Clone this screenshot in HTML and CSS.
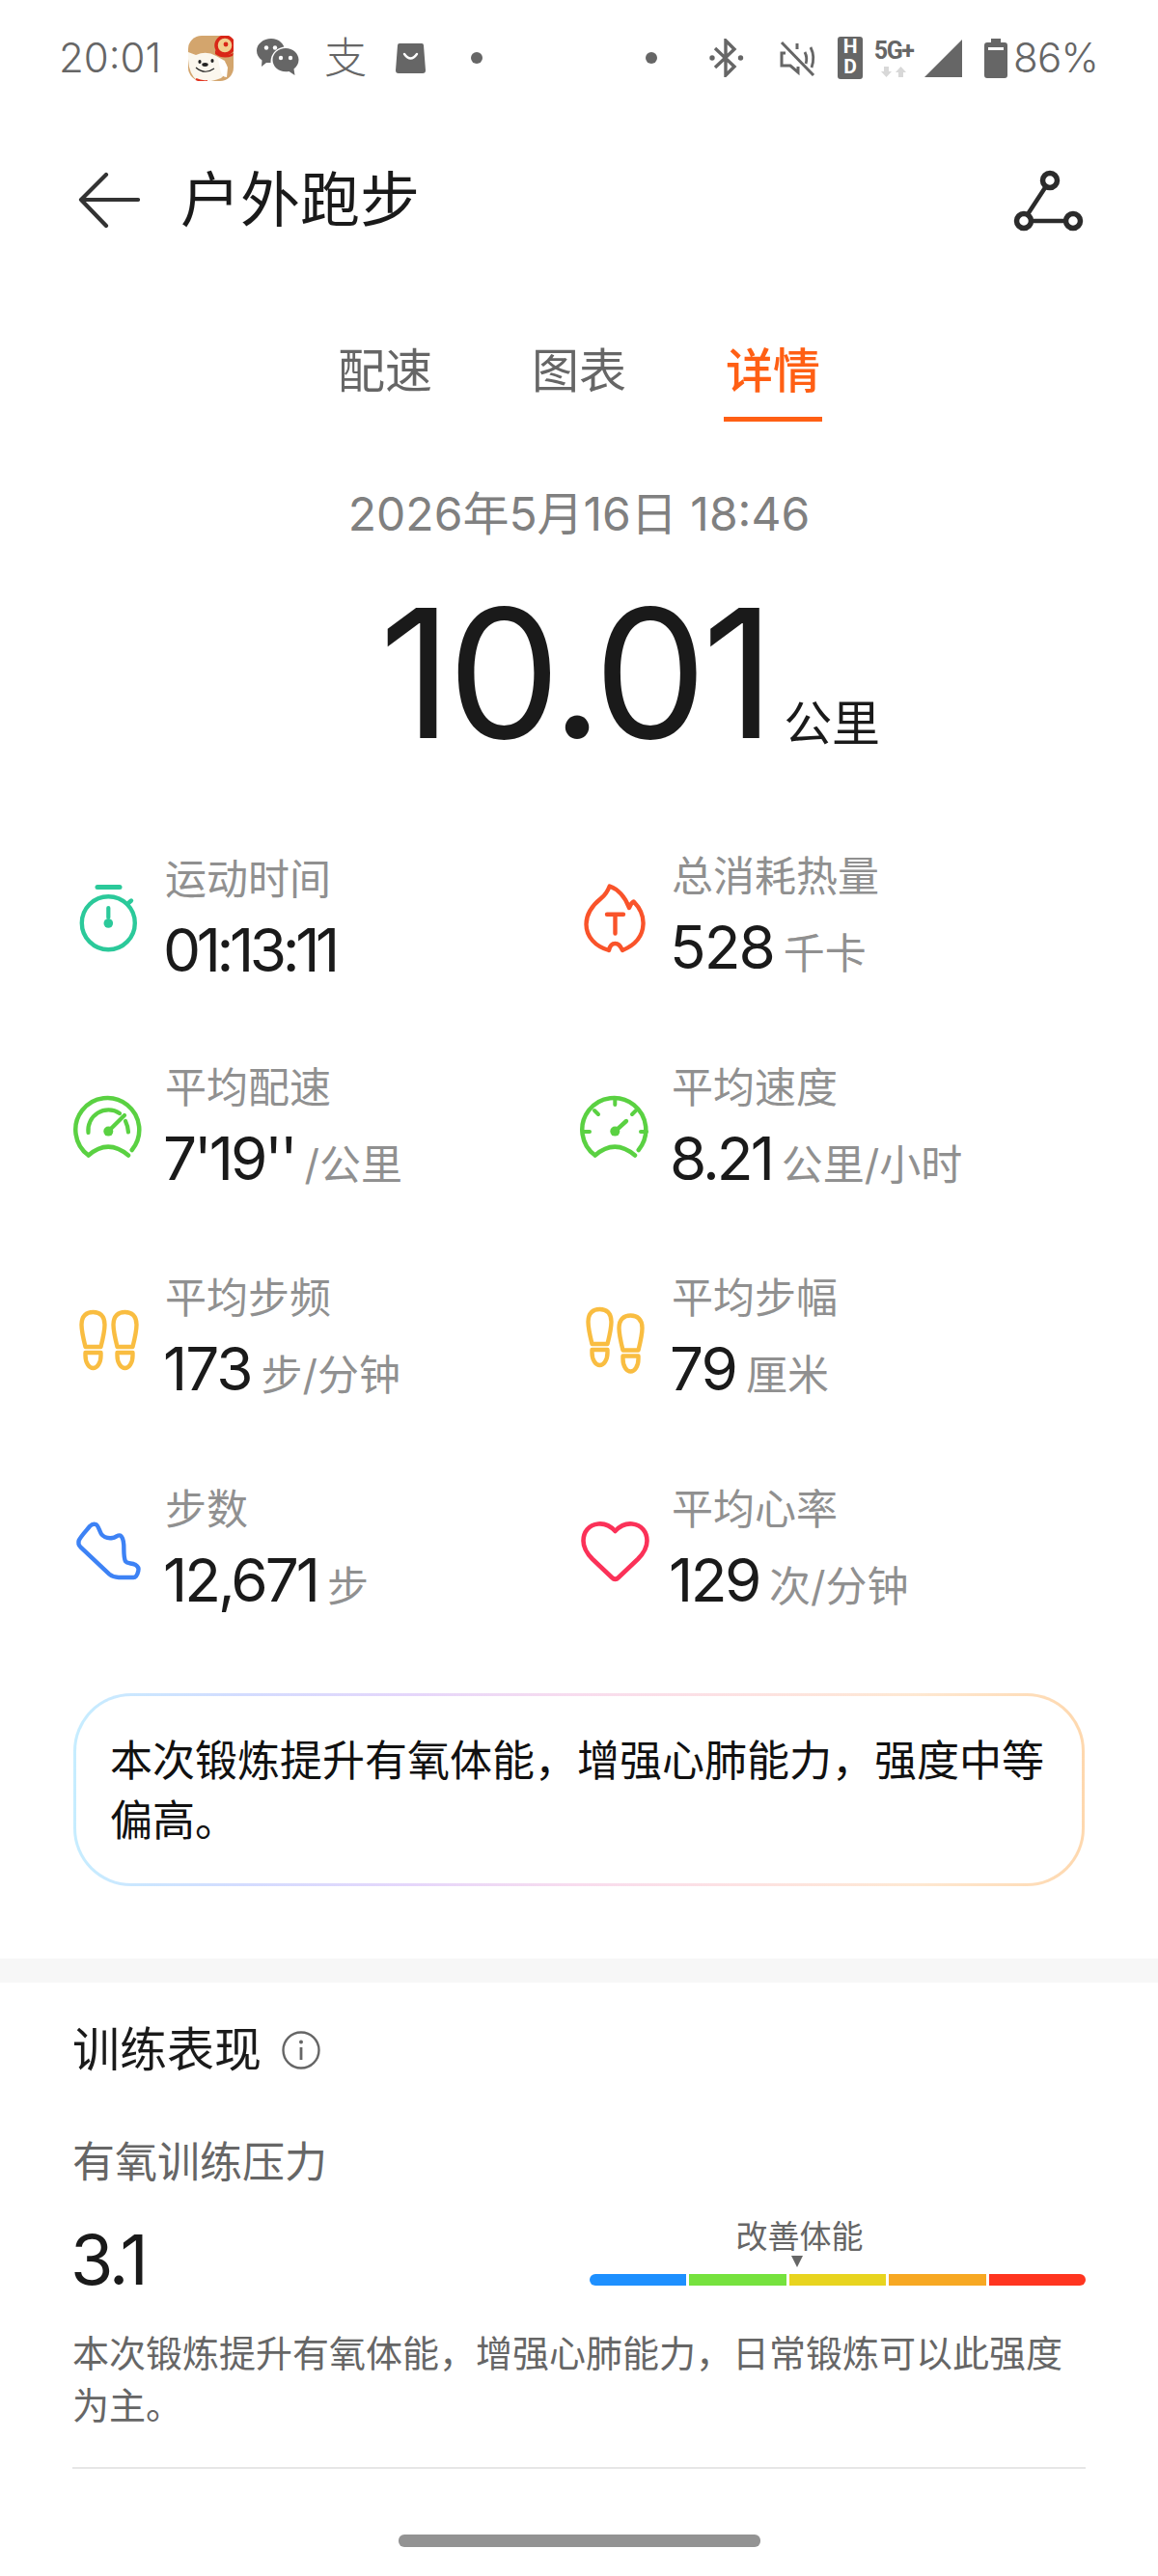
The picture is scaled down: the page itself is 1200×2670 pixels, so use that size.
FILE: index.html
```html
<!DOCTYPE html>
<html lang="zh-CN">
<head>
    <meta charset="UTF-8">
    <title>户外跑步</title>
    <link rel="stylesheet" href="styles.css">
</head>
<body>
<div class="page">
    <!-- status bar -->
    <div class="statusbar">
        <div class="sb-group">
            <span class="sb-time">20:01</span>
            <svg class="sb-app" width="47" height="47" viewBox="0 0 47 47">
                <rect x="0" y="0" width="47" height="47" rx="14" fill="#d3a56d"/>
                <path d="M0 17 L8 20 Q19 15 29 21 L38 26 Q42 38 34 44 Q22 49 10 47 Q-1 40 0 17Z" fill="#fbf7ee"/>
                <path d="M31 24 Q39 25 41 33 L40 43 Q34 43 33 34Z" fill="#fff"/>
                <ellipse cx="12" cy="27" rx="1.600" ry="2" fill="#222"/>
                <ellipse cx="25" cy="26" rx="1.600" ry="2" fill="#222"/>
                <ellipse cx="17.500" cy="30" rx="3.200" ry="1.900" fill="#222"/>
                <path d="M8 33 Q17 41 27 34" fill="none" stroke="#222" stroke-width="1.100"/>
                <path d="M8 45 Q14 48 20 47" fill="none" stroke="#e2321e" stroke-width="2"/>
                <circle cx="38" cy="10" r="9" fill="#f1cf8f" stroke="#d92617" stroke-width="3.500"/>
                <circle cx="39" cy="9" r="2.400" fill="#d92617"/>
                <path d="M28 15 Q36 23 47 18 L46 21 Q36 25 28 19Z" fill="#d92617"/>
            </svg>
            <svg class="sb-wechat" width="44" height="40" viewBox="0 0 44 40">
                <path d="M15 0 C23 0 29 5.500 29 12.500 C29 19.500 23 25 15 25 L10 25 L5 29 L5.500 22.500 C2 20 0 16.500 0 12.500 C0 5.500 7 0 15 0Z" fill="#666"/>
                <circle cx="30" cy="24" r="15.500" fill="#fff"/>
                <path d="M30 10 C37.500 10 43.500 15.500 43.500 22 C43.500 26 41.500 29 38.500 31.500 L39.500 38 L33.500 34 C32.500 34.200 31 34.300 30 34.300 C22.500 34.300 16.500 28.800 16.500 22 C16.500 15.500 22.500 10 30 10Z" fill="#666"/>
                <circle cx="10" cy="9.500" r="2.200" fill="#fff"/>
                <circle cx="19" cy="9.500" r="2.200" fill="#fff"/>
                <circle cx="25" cy="20" r="2.200" fill="#fff"/>
                <circle cx="35" cy="20" r="2.200" fill="#fff"/>
            </svg>
            <span class="sb-zhi">支</span>
            <svg class="sb-bag" width="31" height="31" viewBox="0 0 31 31">
                <path d="M4 0 H27 Q29 0 29 2 L31 28 Q31 31 28 31 H3 Q0 31 0 28 L2 2 Q2 0 4 0Z" fill="#666"/>
                <path d="M9 11 Q15.500 20 22 11" fill="none" stroke="#fff" stroke-width="2.400" stroke-linecap="round"/>
            </svg>
            <span class="sb-dot sb-dot-left"></span>
        </div>
        <div class="sb-group">
            <span class="sb-dot"></span>
            <svg class="sb-bt" width="36" height="40" viewBox="0 0 36 40">
                <path d="M6 10 L26 29 L17 38 V2 L26 11 L6 30" fill="none" stroke="#666" stroke-width="3.400"/>
                <circle cx="3" cy="20" r="2.700" fill="#666"/>
                <circle cx="32.500" cy="20" r="2.700" fill="#666"/>
            </svg>
            <svg class="sb-mute" width="39" height="37" viewBox="0 0 39 37">
                <path d="M2 2 L35 36" stroke="#666" stroke-width="3" fill="none"/>
                <path d="M18 3 V9 M19 27 V33 L11 26 H2 V13 H6" fill="none" stroke="#666" stroke-width="3"/>
                <path d="M26 12 Q29 18 27 24 M32 7 Q37 17 33 28" fill="none" stroke="#666" stroke-width="2.800"/>
            </svg>
            <div class="sb-hd"><span>H</span><span>D</span></div>
            <div class="sb-net">
                <span class="sb-5g">5G+</span>
                <svg width="26" height="11" viewBox="0 0 26 11">
                    <path d="M3 0 H8 V5 H11 L5.500 11 L0 5 H3Z M18 11 H23 V6 H26 L20.500 0 L15 6 H18Z" fill="#d8d8d8"/>
                </svg>
            </div>
            <svg class="sb-signal" width="39" height="39" viewBox="0 0 39 39">
                <path d="M39 0 V39 H0Z" fill="#666"/>
            </svg>
            <svg class="sb-batt" width="24" height="41" viewBox="0 0 24 41">
                <path d="M7 0 H17 V4 H21 Q24 4 24 7 V38 Q24 41 21 41 H3 Q0 41 0 38 V7 Q0 4 3 4 H7Z" fill="#666"/>
                <rect x="4" y="9" width="16" height="3" fill="#fff"/>
            </svg>
            <span class="sb-pct">86%</span>
        </div>
    </div>

    <!-- title -->
    <div class="header">
        <svg class="back" width="64" height="60" viewBox="0 0 64 60">
            <path d="M62 29 H3 M29 3 L3 29 L29 56" fill="none" stroke="#333" stroke-width="4.200" stroke-linecap="round" stroke-linejoin="round"/>
        </svg>
        <h1 class="title">户外跑步</h1>
        <svg class="route" width="76" height="70" viewBox="0 0 76 70">
            <path d="M36 20 L17 49 M21 56 H56" fill="none" stroke="#2b2b2b" stroke-width="4.500"/>
            <circle cx="40" cy="14" r="7.500" fill="none" stroke="#2b2b2b" stroke-width="5.500"/>
            <circle cx="13" cy="56" r="7.500" fill="none" stroke="#2b2b2b" stroke-width="5.500"/>
            <circle cx="64" cy="56" r="7.500" fill="none" stroke="#2b2b2b" stroke-width="5.500"/>
        </svg>
    </div>

    <div class="tabs">
        <span class="tab">配速</span>
        <span class="tab">图表</span>
        <span class="tab active">详情</span>
    </div>

    <div class="date">2026年5月16日 18:46</div>

    <div class="distance">
        <span class="distance-num">10.01</span>
        <span class="distance-unit">公里</span>
    </div>

    <!-- stats -->
    <div class="stats">
        <div class="stat">
            <svg class="stat-icon" viewBox="0 0 72 72">
                <path d="M25 3.500 H48" stroke="#2bc99a" stroke-width="5" stroke-linecap="round"/>
                <circle cx="36.300" cy="40.700" r="27.500" fill="none" stroke="#2bc99a" stroke-width="4.400"/>
                <path d="M56 21 L60 17.500" stroke="#2bc99a" stroke-width="4.400" stroke-linecap="round"/>
                <path d="M36.300 25 V35" stroke="#2bc99a" stroke-width="4.200" stroke-linecap="round"/>
                <circle cx="36.300" cy="41" r="4.800" fill="#2bc99a"/>
            </svg>
            <div class="stat-text">
                <div class="stat-label">运动时间</div>
                <div class="stat-value"><b class="ones">01:13:11</b></div>
            </div>
        </div>
        <div class="stat">
            <svg class="stat-icon" viewBox="0 0 72 72">
                <path d="M30.700 2.500 C40 6 47 14 51 25 C52 22 53 20 55.700 18.500 C62 25 66 33 65.500 42 C65 55 56 64 44 69 C42 64 40 62 36.500 62 C33 62 31 64 30 69 C16 65 6.500 55 6.500 42 C6.500 32 12 23 22 15 C27 11 29 7 30.700 2.500Z" fill="none" stroke="#f9532a" stroke-width="4.400" stroke-linejoin="round"/>
                <path d="M28 31.700 H45 M36.500 32 V51.500" fill="none" stroke="#f9532a" stroke-width="4.400" stroke-linecap="round"/>
            </svg>
            <div class="stat-text">
                <div class="stat-label">总消耗热量</div>
                <div class="stat-value"><b>528</b><span>千卡</span></div>
            </div>
        </div>
        <div class="stat">
            <svg class="stat-icon" viewBox="0 0 72 72">
                <path d="M15.700 63.500 A33 33 0 1 1 60.700 58 M15.700 63.500 Q36 45.700 57 63.500" fill="none" stroke="#5ad142" stroke-width="4.500" stroke-linecap="round"/>
                <path d="M15.500 40 A21 21 0 0 1 48 20 M54 28 Q56.500 33 57 39.500" fill="none" stroke="#5ad142" stroke-width="4.200" stroke-linecap="round"/>
                <path d="M36.300 38.600 L53 22" stroke="#5ad142" stroke-width="4.200" stroke-linecap="round"/>
                <circle cx="36.300" cy="38.600" r="5" fill="#5ad142"/>
            </svg>
            <div class="stat-text">
                <div class="stat-label">平均配速</div>
                <div class="stat-value"><b class="some-ones">7'19''</b><span>/公里</span></div>
            </div>
        </div>
        <div class="stat">
            <svg class="stat-icon" viewBox="0 0 72 72">
                <path d="M15.700 63.500 A33 33 0 1 1 60.700 58 M15.700 63.500 Q36 45.700 57 63.500" fill="none" stroke="#5ad142" stroke-width="4.500" stroke-linecap="round"/>
                <path d="M36.300 5 V11 M15 17 L19 21 M58 17 L54 21 M4 39 H10 M63 39 H69" stroke="#5ad142" stroke-width="4" stroke-linecap="round"/>
                <path d="M36.300 38.600 L48 28" stroke="#5ad142" stroke-width="4.400" stroke-linecap="round"/>
                <circle cx="36.300" cy="38.600" r="5" fill="#5ad142"/>
            </svg>
            <div class="stat-text">
                <div class="stat-label">平均速度</div>
                <div class="stat-value"><b class="some-ones">8.21</b><span>公里/小时</span></div>
            </div>
        </div>
        <div class="stat">
            <svg class="stat-icon foot" viewBox="0 0 72 72">
                <g transform="translate(8.500 6)">
                    <path d="M4 37 C1 25 0 20 0 14 C0 5 5 1 12 1 C19 1 24 5 24 14 C24 20 23 25 20 37Z M4 43 H20 V46 C20 54 16 59 12 59 C8 59 4 54 4 46Z"/>
                </g>
                <g transform="translate(41.500 6)">
                    <path d="M4 37 C1 25 0 20 0 14 C0 5 5 1 12 1 C19 1 24 5 24 14 C24 20 23 25 20 37Z M4 43 H20 V46 C20 54 16 59 12 59 C8 59 4 54 4 46Z"/>
                </g>
            </svg>
            <div class="stat-text">
                <div class="stat-label">平均步频</div>
                <div class="stat-value"><b>173</b><span>步/分钟</span></div>
            </div>
        </div>
        <div class="stat">
            <svg class="stat-icon foot" viewBox="0 0 72 72">
                <g transform="translate(8.500 3)">
                    <path d="M4 37 C1 25 0 20 0 14 C0 5 5 1 12 1 C19 1 24 5 24 14 C24 20 23 25 20 37Z M4 43 H20 V46 C20 54 16 59 12 59 C8 59 4 54 4 46Z"/>
                </g>
                <g transform="translate(40.500 9.500)">
                    <path d="M4 37 C1 25 0 20 0 14 C0 5 5 1 12 1 C19 1 24 5 24 14 C24 20 23 25 20 37Z M4 43 H20 V46 C20 54 16 59 12 59 C8 59 4 54 4 46Z"/>
                </g>
            </svg>
            <div class="stat-text">
                <div class="stat-label">平均步幅</div>
                <div class="stat-value"><b>79</b><span>厘米</span></div>
            </div>
        </div>
        <div class="stat">
            <svg class="stat-icon" viewBox="0 0 72 72">
                <path d="M23.300 9 C26 10 27 16 29 19 C32 23 37 23.500 40.700 23 C44 22.500 47 19 49 20.700 C52 23 52 27 52.300 31 C52.500 38 52 43 54 47.300 C56 50 60 49 64 50.700 C67 52.500 68 55 67.300 57.300 C66.500 61 65 64 62.300 64 H47 C43 64 40 63 37.300 60.700 L7.300 32.300 C5 30 5 28 5.700 25.700 C8 21 13 16 17.300 10.700 C19 9 21 8.300 23.300 9Z" fill="none" stroke="#3d82f5" stroke-width="4.400" stroke-linejoin="round"/>
            </svg>
            <div class="stat-text">
                <div class="stat-label">步数</div>
                <div class="stat-value"><b class="some-ones">12,671</b><span>步</span></div>
            </div>
        </div>
        <div class="stat">
            <svg class="stat-icon" viewBox="0 0 72 72">
                <path d="M36.500 16 C30 9 24 8 19 8.500 C9 9.500 3.500 17 3.500 26 C3.500 33 7 39 13 45 L33 64 Q36.500 67.500 40 64 L60 45 C66 39 69.500 33 69.500 26 C69.500 17 64 9.500 54 8.500 C49 8 43 9 36.500 16Z" fill="none" stroke="#fb3158" stroke-width="4.600" stroke-linejoin="round"/>
            </svg>
            <div class="stat-text">
                <div class="stat-label">平均心率</div>
                <div class="stat-value"><b class="pull">129</b><span>次/分钟</span></div>
            </div>
        </div>
    </div>

    <div class="summary">本次锻炼提升有氧体能，增强心肺能力，强度中等偏高。</div>

    <div class="band"></div>

    <div class="section">
        <div class="section-title">
            <span>训练表现</span>
            <svg width="40" height="40" viewBox="0 0 40 40">
                <circle cx="20" cy="20" r="18.500" fill="none" stroke="#666" stroke-width="2.400"/>
                <circle cx="20" cy="11.500" r="2" fill="#666"/>
                <path d="M20 17 V30" stroke="#666" stroke-width="2.800"/>
            </svg>
        </div>
        <div class="section-sub">有氧训练压力</div>
        <div class="load">
            <div class="load-num">3.1</div>
            <div class="gauge">
                <div class="gauge-mark">
                    <span>改善体能</span>
                    <i></i>
                </div>
                <div class="gauge-bar">
                    <span class="seg seg1"></span>
                    <span class="seg seg2"></span>
                    <span class="seg seg3"></span>
                    <span class="seg seg4"></span>
                    <span class="seg seg5"></span>
                </div>
            </div>
        </div>
        <p class="desc">本次锻炼提升有氧体能，增强心肺能力，日常锻炼可以此强度为主。</p>
        <div class="divider"></div>
    </div>

    <div class="homebar"></div>
</div>
</body>
</html>
```

FILE: styles.css
```css
/* General */
* {
    box-sizing: border-box;
}

body {
    margin: 0;
    background-color: #fff;
    font-family: 'Inter', 'Noto Sans CJK SC', sans-serif;
    color: #1a1a1a;
}

.page {
    width: 1200px;
    height: 2670px;
    overflow: hidden;
}

/* Status bar */
.statusbar {
    height: 120px;
    padding: 0 62px 0 61px;
    display: flex;
    justify-content: space-between;
    align-items: center;
}

.sb-group {
    display: flex;
    align-items: center;
}

.sb-time, .sb-pct {
    font-size: 42px;
    font-weight: 300;
    color: #666;
    line-height: 50px;
}

.sb-app { margin-left: 28px; }
.sb-wechat { margin-left: 24px; }
.sb-zhi {
    margin-left: 26px;
    font-size: 44px;
    font-weight: 300;
    line-height: 50px;
    color: #666;
}
.sb-bag { margin-left: 30px; }

.sb-dot {
    width: 12px;
    height: 12px;
    border-radius: 50%;
    background-color: #666;
}
.sb-dot-left { margin-left: 47px; }

.sb-bt { margin-left: 54px; }
.sb-mute { margin-left: 37px; }

.sb-hd {
    margin-left: 21px;
    width: 26px;
    height: 44px;
    border-radius: 3px;
    background-color: #666;
    display: flex;
    flex-direction: column;
    align-items: center;
    color: #fff;
    font-family: 'Roboto', sans-serif;
    font-weight: 700;
    font-size: 21px;
    line-height: 21px;
}

.sb-net {
    margin-left: 7px;
    width: 50px;
    display: flex;
    flex-direction: column;
    align-items: center;
    gap: 3px;
}

.sb-5g {
    font-family: 'Roboto', sans-serif;
    font-weight: 700;
    font-size: 25px;
    line-height: 26px;
    letter-spacing: -1.4px;
    color: #666;
}

.sb-signal { margin-left: 7px; }
.sb-batt { margin-left: 23px; }
.sb-pct {
    margin-left: 6px;
    letter-spacing: -0.8px;
}

/* Title */
.header {
    height: 114px;
    margin-top: 31px;
    padding: 0 76px 0 81px;
    display: flex;
    align-items: center;
}

.title {
    margin: 0 0 0 42px;
    font-size: 62px;
    font-weight: 400;
    line-height: 80px;
}

.route {
    margin-left: auto;
}

/* Tabs */
.tabs {
    margin-top: 85px;
    display: flex;
    justify-content: center;
    gap: 99px;
}

.tab {
    padding: 0 2px 12px;
    font-size: 49px;
    line-height: 70px;
    color: #666;
    border-bottom: 5px solid transparent;
}

.tab.active {
    color: #ff5f14;
    font-weight: 500;
    border-bottom-color: #ff5f14;
}

/* Distance */
.date {
    margin-top: 66px;
    text-align: center;
    font-size: 48px;
    line-height: 60px;
    color: #808080;
}

.distance {
    padding-left: 393px;
    height: 200px;
    margin-top: 35px;
    display: flex;
    align-items: flex-end;
}

.distance-num {
    font-size: 186px;
    line-height: 200px;
    letter-spacing: -5px;
}

.distance-unit {
    margin-left: 14px;
    margin-bottom: 18px;
    font-size: 50px;
    line-height: 60px;
}

/* Stats */
.stats {
    margin-top: 85px;
    padding-left: 76px;
    display: grid;
    grid-template-columns: 525px 525px;
    row-gap: 81.67px;
}

.stat {
    height: 137px;
    display: flex;
    align-items: center;
    gap: 23px;
}

.stat-icon {
    width: 72px;
    height: 72px;
    flex: none;
}

.foot path {
    fill: none;
    stroke: #f9bd41;
    stroke-width: 4.400;
    stroke-linejoin: round;
}

.stat-label {
    font-size: 43px;
    line-height: 56px;
    color: #909090;
}

.stat-value {
    margin-top: 11px;
    margin-left: -2px;
    display: flex;
    align-items: baseline;
    line-height: 70px;
}

.stat-value b {
    font-size: 62px;
    font-weight: 400;
    letter-spacing: -2px;
}

/* Inter's 1 is wider than the one in the screenshot */
.stat-value b.ones {
    letter-spacing: -4.400px;
}

.stat-value b.some-ones {
    letter-spacing: -3px;
}

.stat-value b.pull {
    margin-left: -1px;
    letter-spacing: -2.500px;
}

.stat-value span {
    margin-left: 10px;
    font-size: 43px;
    color: #909090;
}

/* Summary card */
.summary {
    margin: 79px 76px 0;
    height: 200px;
    padding: 36px 34px 0 35px;
    border: 3px solid transparent;
    border-radius: 60px;
    background:
        linear-gradient(#fff, #fff) padding-box,
        linear-gradient(90deg, #c6edff, #d3dcff, #e5d6fb, #f8dcee, #fde2e2, #fee8d2, #fed8ae) border-box;
    font-size: 44px;
    line-height: 62px;
    color: #111;
}

.band {
    margin-top: 75px;
    height: 25px;
    background-color: #f7f7f7;
}

/* Training section */
.section {
    padding: 40px 75px 0;
}

.section-title {
    display: flex;
    align-items: center;
    gap: 21px;
    font-size: 49px;
    line-height: 60px;
}

.section-sub {
    margin-top: 61px;
    font-size: 44px;
    line-height: 50px;
    color: #666;
}

.load {
    margin-top: 32px;
    height: 71px;
    display: flex;
    justify-content: space-between;
}

.load-num {
    margin-left: -2px;
    padding-top: 8px;
    font-size: 72px;
    line-height: 72px;
    letter-spacing: -3px;
}

.gauge {
    width: 514px;
}

.gauge-mark {
    width: 133px;
    margin-left: 151px;
    display: flex;
    flex-direction: column;
    align-items: center;
    font-size: 33px;
    line-height: 40px;
    color: #666;
}

.gauge-mark i {
    width: 0;
    height: 0;
    margin-right: 5px;
    border-left: 6px solid transparent;
    border-right: 6px solid transparent;
    border-top: 12px solid #666;
}

.gauge-bar {
    margin-top: 7px;
    height: 12px;
    display: flex;
    gap: 3px;
    border-radius: 6px;
    overflow: hidden;
}

.seg { flex: 1; }
.seg1 { background-color: #1e90ff; }
.seg2 { background-color: #76e23e; }
.seg3 { background-color: #e8d41f; }
.seg4 { background-color: #f7a823; }
.seg5 { background-color: #ff3520; }

.desc {
    margin: 43px 0 0;
    font-size: 38px;
    line-height: 54px;
    color: #666;
}

.divider {
    margin-top: 37px;
    height: 2px;
    background-color: #e6e6e6;
}

.homebar {
    width: 375px;
    height: 13px;
    margin: 68px auto 0;
    border-radius: 6px;
    background-color: #939393;
}
```
